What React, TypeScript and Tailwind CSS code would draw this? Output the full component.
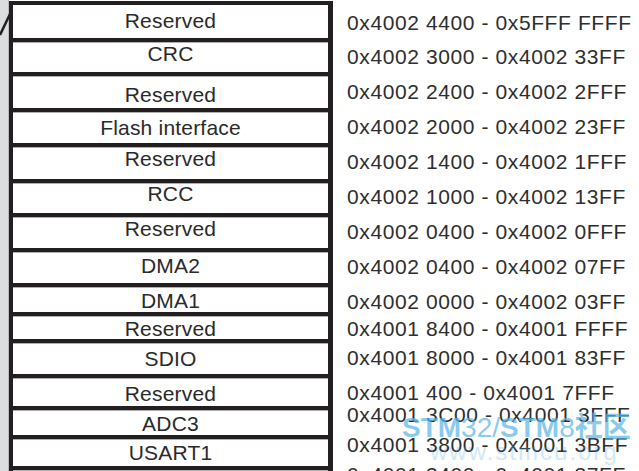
import React from "react";

// one memory-map block per row: label, row height (incl. 4px bottom rule), label nudge
const BLOCKS = [
  { label: "Reserved", h: "h-[37px]", nudge: "pb-[2px]" },
  { label: "CRC", h: "h-[34px]", nudge: "pb-[6px]" },
  { label: "Reserved", h: "h-[36px]", nudge: "pt-[6px]" },
  { label: "Flash interface", h: "h-[35px]", nudge: "" },
  { label: "Reserved", h: "h-[36px]", nudge: "pb-[8px]" },
  { label: "RCC", h: "h-[34px]", nudge: "pb-[8px]" },
  { label: "Reserved", h: "h-[35px]", nudge: "pb-[7px]" },
  { label: "DMA2", h: "h-[35px]", nudge: "pb-[4px]" },
  { label: "DMA1", h: "h-[29px]", nudge: "pt-[2px]" },
  { label: "Reserved", h: "h-[27px]", nudge: "pt-[3px]" },
  { label: "SDIO", h: "h-[35px]", nudge: "pt-[1px]" },
  { label: "Reserved", h: "h-[32px]", nudge: "pt-[4px]" },
  { label: "ADC3", h: "h-[29px]", nudge: "pt-[3px]" },
  { label: "USART1", h: "h-[31px]", nudge: "" },
  { label: "", h: "h-[40px]", nudge: "" },
];

const ADDRESSES = [
  { text: "0x4002 4400 - 0x5FFF FFFF", h: "h-[34px]" },
  { text: "0x4002 3000 - 0x4002 33FF", h: "h-[35px]" },
  { text: "0x4002 2400 - 0x4002 2FFF", h: "h-[35px]" },
  { text: "0x4002 2000 - 0x4002 23FF", h: "h-[35px]" },
  { text: "0x4002 1400 - 0x4002 1FFF", h: "h-[35px]" },
  { text: "0x4002 1000 - 0x4002 13FF", h: "h-[35px]" },
  { text: "0x4002 0400 - 0x4002 0FFF", h: "h-[35px]" },
  { text: "0x4002 0400 - 0x4002 07FF", h: "h-[35px]" },
  { text: "0x4002 0000 - 0x4002 03FF", h: "h-[27px]" },
  { text: "0x4001 8400 - 0x4001 FFFF", h: "h-[29px]" },
  { text: "0x4001 8000 - 0x4001 83FF", h: "h-[35px]" },
  { text: "0x4001 400 - 0x4001 7FFF", h: "h-[22px]" },
  { text: "0x4001 3C00 - 0x4001 3FFF", h: "h-[30px]" },
  { text: "0x4001 3800 - 0x4001 3BFF", h: "h-[30px]" },
  { text: "0x4001 3400 - 0x4001 37FF", h: "h-[30px]" },
];

export default function App() {
  return (
    <div className="relative flex w-[639px] h-[471px] overflow-hidden bg-white font-['Liberation_Sans',Arial,sans-serif] text-[21px] leading-[24px] text-[#2a2a2a]">
      {/* grey margin strip with the leader line */}
      <div className="relative w-[9px] shrink-0 bg-[#dcdddf] border-r border-[#b9babc]">
        <svg className="absolute left-0 top-0" width="12" height="40" viewBox="0 0 12 40">
          <line x1="0" y1="35" x2="10" y2="14" stroke="#231f20" strokeWidth="2.5" />
        </svg>
      </div>

      {/* register blocks */}
      <div className="mt-[1px] w-[324px] shrink-0 flex flex-col border-t-4 border-l-4 border-r-[5px] border-[#231f20] self-start">
        {BLOCKS.map((b, i) => (
          <div
            key={i}
            className={`${b.h} shrink-0 flex items-center justify-center border-b-4 border-[#231f20] shadow-[0_1px_0_#b0b0b0] tracking-[0.2px] ${b.nudge}`}
          >
            {b.label}
          </div>
        ))}
      </div>

      {/* address ranges */}
      <div className="flex flex-col pl-[14px] pt-[11px] tracking-[0.6px] whitespace-nowrap text-[#2e2e2e]">
        {ADDRESSES.map((a, i) => (
          <div key={i} className={`${a.h} shrink-0`}>
            {a.text}
          </div>
        ))}
      </div>

      {/* site watermark */}
      <div className="absolute left-[402px] top-[411px] pointer-events-none opacity-70 text-[#5ab4e6]">
        <div className="text-[28px] leading-[28px] whitespace-nowrap font-['Liberation_Sans','Noto_Sans_CJK_SC',sans-serif]">
          <span className="font-bold">STM</span>
          <span className="font-light">32/</span>
          <span className="font-bold">STM</span>
          <span className="font-light">8</span>
          <span className="font-['Noto_Sans_CJK_SC',sans-serif] font-bold">社区</span>
        </div>
        <div className="ml-[28px] mt-[-2px] text-[24px] leading-[24px] tracking-[2px] opacity-40">www.stmcu.org</div>
      </div>
    </div>
  );
}
